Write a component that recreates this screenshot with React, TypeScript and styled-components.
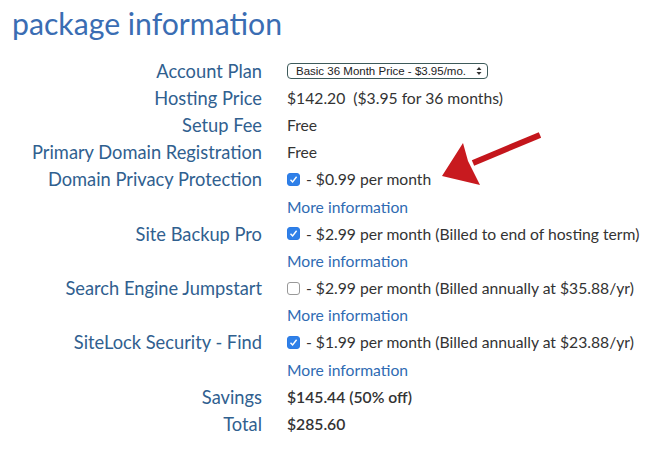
import React from 'react'
import styled, { createGlobalStyle } from 'styled-components'

const GlobalStyle = createGlobalStyle`
  body {
    margin: 0;
    background: #ffffff;
    font-family: Lato, "Open Sans", sans-serif;
  }
`

const Page = styled.div`
  position: relative;
  width: 660px;
  height: 450px;
  overflow: hidden;
  background: #fff;
`

const Title = styled.h1`
  margin: 0;
  padding: 3px 0 0 12px;
  height: 57px;
  box-sizing: border-box;
  font-family: Lato, sans-serif;
  font-weight: 400;
  font-size: 30.2px;
  line-height: 40px;
  color: #3a6db3;
`

const Table = styled.div`
  display: grid;
  grid-template-columns: 262px 1fr;
  column-gap: 25px;
  grid-auto-rows: 27.2px;
  align-items: center;
`

const Label = styled.div`
  text-align: right;
  font-size: 18.3px;
  color: #30608f;
  white-space: nowrap;
`

const Value = styled.div<{ bold?: boolean }>`
  display: flex;
  align-items: center;
  gap: 4px;
  font-size: 15.7px;
  color: #333;
  white-space: nowrap;
  font-weight: ${({ bold }) => (bold ? 600 : 400)};
`

const MoreLink = styled.a`
  font-size: 15.7px;
  color: #2f6bb3;
  text-decoration: none;
`

const Select = styled.div`
  display: inline-flex;
  align-items: center;
  justify-content: space-between;
  width: 201px;
  height: 16px;
  box-sizing: border-box;
  padding: 0 5px 0 8px;
  border: 1px solid #3d5a5a;
  border-radius: 4px;
  font-family: "Liberation Sans", Arial, sans-serif;
  font-size: 11.5px;
  color: #222;
`

const Box = styled.span<{ checked?: boolean }>`
  display: inline-flex;
  align-items: center;
  justify-content: center;
  width: 13px;
  height: 13px;
  box-sizing: border-box;
  border-radius: 3px;
  border: 1px solid ${({ checked }) => (checked ? '#2c7be5' : '#999')};
  background: ${({ checked }) => (checked ? '#2f80e8' : '#fff')};
  margin-right: 2px;
`

const Arrow = styled.svg`
  position: absolute;
  left: 435px;
  top: 125px;
`

function Check({ checked }: { checked?: boolean }) {
  return (
    <Box checked={checked}>
      {checked && (
        <svg width="9" height="9" viewBox="0 0 9 9">
          <path d="M1.5 4.8 L3.6 7 L7.6 1.8" fill="none" stroke="#fff" strokeWidth="1.4" />
        </svg>
      )}
    </Box>
  )
}

const rows: { label: string; value: React.ReactNode }[] = [
  {
    label: 'Account Plan',
    value: (
      <Select>
        <span>Basic 36 Month Price - $3.95/mo.</span>
        <svg width="6" height="10" viewBox="0 0 6 10">
          <path d="M0.5 4 L3 1 L5.5 4 Z M0.5 6 L3 9 L5.5 6 Z" fill="#333" />
        </svg>
      </Select>
    ),
  },
  { label: 'Hosting Price', value: '$142.20\u00a0\u00a0($3.95 for 36 months)' },
  { label: 'Setup Fee', value: 'Free' },
  { label: 'Primary Domain Registration', value: 'Free' },
]

const addons = [
  { label: 'Domain Privacy Protection', checked: true, text: '- $0.99 per month' },
  { label: 'Site Backup Pro', checked: true, text: '- $2.99 per month (Billed to end of hosting term)' },
  { label: 'Search Engine Jumpstart', checked: false, text: '- $2.99 per month (Billed annually at $35.88/yr)' },
  { label: 'SiteLock Security - Find', checked: true, text: '- $1.99 per month (Billed annually at $23.88/yr)' },
]

export default function App() {
  return (
    <Page>
      <GlobalStyle />
      <Title>package information</Title>
      <Table>
        {rows.map((r) => (
          <React.Fragment key={r.label}>
            <Label>{r.label}</Label>
            <Value>{r.value}</Value>
          </React.Fragment>
        ))}
        {addons.map((a) => (
          <React.Fragment key={a.label}>
            <Label>{a.label}</Label>
            <Value>
              <Check checked={a.checked} />
              {a.text}
            </Value>
            <span />
            <Value>
              <MoreLink href="#">More information</MoreLink>
            </Value>
          </React.Fragment>
        ))}
        <Label>Savings</Label>
        <Value bold>$145.44 (50% off)</Value>
        <Label>Total</Label>
        <Value bold>$285.60</Value>
      </Table>
      <Arrow width="115" height="70" viewBox="0 0 115 70">
        <path d="M105 10 L38 38" stroke="#c4161c" strokeWidth="6" />
        <path d="M7 51 L28 18 L33 36 L45 60 Z" fill="#c81a1f" />
      </Arrow>
    </Page>
  )
}
